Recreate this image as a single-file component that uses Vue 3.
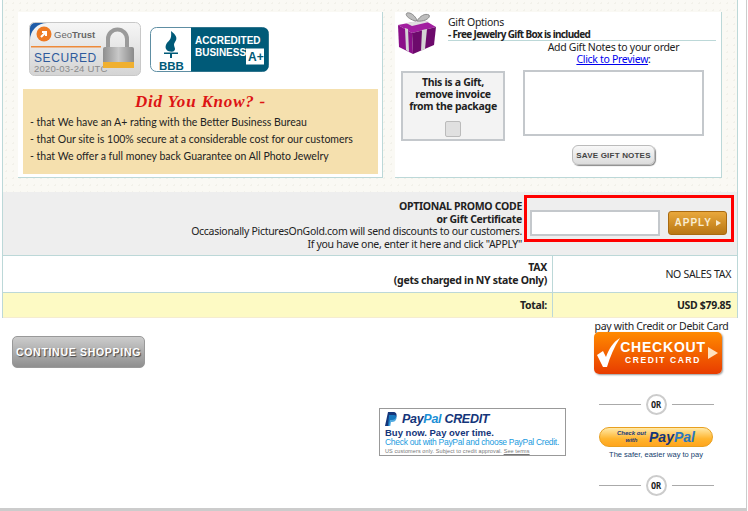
<template>
  <div class="page">
    <div class="frame">
      <section class="top">
        <div class="box box-left">
          <div class="badges">
            <svg class="geotrust" width="112" height="54" viewBox="0 0 112 54">
              <defs>
                <linearGradient id="geoBg" x1="0" y1="0" x2="0" y2="1">
                  <stop offset="0" stop-color="#f6f6f6" />
                  <stop offset="1" stop-color="#d4d4d4" />
                </linearGradient>
                <linearGradient id="lockBody" x1="0" y1="0" x2="1" y2="0">
                  <stop offset="0" stop-color="#8e8e8e" />
                  <stop offset="0.5" stop-color="#c8c8c8" />
                  <stop offset="1" stop-color="#8a8a8a" />
                </linearGradient>
              </defs>
              <rect x="0.5" y="0.5" width="111" height="53" rx="5" fill="url(#geoBg)" stroke="#c8c8c8" />
              <path d="M1 18V6a5 5 0 0 1 5-5h12a17 17 0 0 0-17 17z" fill="#1f5ca8" />
              <circle cx="15" cy="12" r="7.5" fill="#ee7a23" />
              <path d="M12 15l5-5m-4 0h4v4" stroke="#fff" stroke-width="2" fill="none" />
              <text x="25" y="16" class="geo-name">Geo<tspan font-weight="700">Trust</tspan></text>
              <rect x="2" y="24" width="70" height="1.5" fill="#ee8a3a" />
              <text x="5" y="40" class="geo-sec">SECURED</text>
              <text x="5" y="50" class="geo-date">2020-03-24 UTC</text>
              <path d="M79 28v-11a9.500 9.500 0 0 1 19 0v11" fill="none" stroke="#9a9a9a" stroke-width="4" />
              <rect x="74" y="25" width="31" height="21" rx="2" fill="url(#lockBody)" />
              <rect x="74" y="40" width="31" height="6" fill="#f0b030" />
            </svg>
            <svg class="bbb" width="119" height="45" viewBox="0 0 119 45">
              <rect x="0.500" y="0.500" width="118" height="44" rx="6" fill="#fff" stroke="#5e8ea3" />
              <path d="M41 0.500h72a5.500 5.500 0 0 1 5.500 5.500v33a5.500 5.500 0 0 1-5.500 5.500H41z" fill="#005a78" />
              <path d="M21 4c5 4 7 7 4 11s2 6-1 9c-1 1-3 1-6 0-3-2-3-5-1-8s5-3 4-12z" fill="#005a78" />
              <rect x="14" y="25.500" width="14" height="1.500" fill="#005a78" />
              <rect x="20" y="27" width="2" height="4" fill="#005a78" />
              <text x="9" y="43" class="bbb-mark">BBB</text>
              <text x="45" y="17" class="bbb-text">ACCREDITED</text>
              <text x="45" y="29" class="bbb-text">BUSINESS</text>
              <rect x="96" y="21.500" width="18" height="16" fill="#fff" />
              <text x="98" y="34" class="bbb-rate">A+</text>
            </svg>
          </div>
          <div class="know">
            <h3 class="know-title">Did You Know? -</h3>
            <p>- that We have an A+ rating with the Better Business Bureau</p>
            <p>- that Our site is 100% secure at a considerable cost for our customers</p>
            <p>- that We offer a full money back Guarantee on All Photo Jewelry</p>
          </div>
        </div>

        <div class="box box-right">
          <div class="gift-head">
            <svg class="gift-icon" width="42" height="42" viewBox="0 0 42 42">
              <path d="M2 13l26-5 12 7-24 6z" fill="#a21fa0" />
              <path d="M2 13l14 8 1 21-14-7z" fill="#8a0f88" />
              <path d="M16 21l24-6-2 18-21 9z" fill="#6d0a6c" />
              <path d="M9 16l3 1 1 23-3-2zM26 18l5-1-2 20-4 2z" fill="#d4d4d4" />
              <path d="M10 11l6 3 17-4-5-2z" fill="#e0e0e0" />
              <path d="M20 9C14 8 8 3 11 1c4-1 8 3 10 7zM21 9c3-5 8-8 12-6 2 3-5 7-12 6z" fill="#bdbdbd" stroke="#8d8d8d" />
            </svg>
            <div class="gift-title">
              <div>Gift Options</div>
              <div class="gift-free">- Free Jewelry Gift Box is included</div>
            </div>
          </div>
          <div class="gift-body">
            <div class="invoice">
              <div>This is a Gift,<br />remove invoice<br />from the package</div>
              <span class="check"></span>
            </div>
            <div class="notes">
              <div class="notes-title">Add Gift Notes to your order</div>
              <div class="preview"><a href="#">Click to Preview</a>:</div>
              <textarea class="notes-input"></textarea>
              <button class="save">SAVE GIFT NOTES</button>
            </div>
          </div>
        </div>
      </section>

      <section class="promo">
        <div class="promo-text">
          <strong>OPTIONAL PROMO CODE</strong>
          <strong>or Gift Certificate</strong>
          <span>Occasionally PicturesOnGold.com will send discounts to our customers.</span>
          <span>If you have one, enter it here and click "APPLY"</span>
        </div>
        <div class="promo-box">
          <input class="promo-input" />
          <button class="apply">APPLY <i></i></button>
        </div>
      </section>

      <section class="row row-tax">
        <div class="label"><strong>TAX</strong><strong>(gets charged in NY state Only)</strong></div>
        <div class="value">NO SALES TAX</div>
      </section>
      <section class="row row-total">
        <div class="label"><strong>Total:</strong></div>
        <div class="value"><strong>USD $79.85</strong></div>
      </section>
    </div>

    <section class="bottom">
      <button class="continue">CONTINUE SHOPPING</button>
      <div class="credit">
        <div class="credit-logo">
          <svg width="12" height="14" viewBox="0 0 12 14"><path d="M3 0h5c3 0 4 2 3.500 4.500C11 7 9 8 7 8H5l-1 6H0z" fill="#14357a" /><path d="M4 3h5c2 0 3 1.500 2.500 3.500C11 9 9 10 7 10H6l-.7 4H3z" fill="#1a8fd6" opacity="0.75" /></svg>
          <span><i>Pay</i><i class="pal">Pal</i> <i>CREDIT</i></span>
        </div>
        <div class="credit-buy">Buy now. Pay over time.</div>
        <div class="credit-check">Check out with PayPal and choose PayPal Credit.</div>
        <div class="credit-small">US customers only. Subject to credit approval. <u>See terms</u></div>
      </div>
      <div class="pay">
        <div class="pay-title">pay with Credit or Debit Card</div>
        <button class="checkout">
          <svg width="24" height="30" viewBox="0 0 24 30"><path d="M0 17l6-4 3 6C12 11 16 4 23 0 17 9 13 19 10 29H6z" fill="#fff" /></svg>
          <span class="checkout-text"><b>CHECKOUT</b><small>CREDIT CARD</small></span>
          <i></i>
        </button>
        <div class="or"><span>OR</span></div>
        <div class="paypal">
          <span class="paypal-check">Check out<br />with</span>
          <span class="paypal-name"><i>Pay</i><i class="pal">Pal</i></span>
        </div>
        <div class="paypal-note">The safer, easier way to pay</div>
        <div class="or or-last"><span>OR</span></div>
      </div>
    </section>
  </div>
</template>

<script setup>
</script>

<style>
html, body {
  margin: 0;
  background: #fff;
}
</style>

<style scoped>
.page {
  width: 746px;
  height: 508px;
  border-right: 1px solid #ccc;
  border-bottom: 3px solid #ccc;
  overflow: hidden;
  font-family: "Noto Sans", "Liberation Sans", sans-serif;
  font-size: 10.5px;
  letter-spacing: -0.3px;
  color: #222;
  background: #fff;
}
.frame {
  margin-left: 2px;
  width: 736px;
  border-left: 1px solid #bcd8d8;
  border-right: 1px solid #bcd8d8;
  box-sizing: border-box;
}
.top {
  display: flex;
  gap: 12px;
  height: 192px;
  padding: 12px 15px 15px;
  box-sizing: border-box;
  background-color: #faf9f4;
  background-image: radial-gradient(#f2f1ea 1px, transparent 1px);
  background-size: 7px 7px;
}
.box {
  background: #fff;
  border-right: 1px solid #bcd8d8;
  border-bottom: 1px solid #bcd8d8;
  box-sizing: border-box;
  height: 166px;
}
.box-left {
  width: 366px;
  padding: 10px 4px 0 5px;
}
.badges {
  display: flex;
  align-items: center;
  gap: 9px;
  padding-left: 6px;
  height: 54px;
  letter-spacing: 0;
}
.geo-name {
  font: 9.500px "Liberation Sans", sans-serif;
  fill: #666;
}
.geo-sec {
  font: 12px "Liberation Sans", sans-serif;
  fill: #2e5a9c;
  letter-spacing: 0.6px;
}
.geo-date {
  font: 9.500px "Liberation Sans", sans-serif;
  fill: #8a8a8a;
  letter-spacing: 0.2px;
}
.bbb-mark {
  font: 700 11.500px "Liberation Sans", sans-serif;
  fill: #005a78;
}
.bbb-text {
  font: 700 10px "Liberation Sans", sans-serif;
  fill: #fff;
}
.bbb-rate {
  font: 700 12px "Liberation Sans", sans-serif;
  fill: #005a78;
}
.know {
  margin-top: 13px;
  height: 85px;
  background: #f5e0ae;
  padding: 3px 7px 0;
  box-sizing: border-box;
  font-family: Lato, "Liberation Sans", sans-serif;
  font-size: 10.5px;
  letter-spacing: 0;
  color: #222;
}
.know-title {
  margin: 0 0 2px;
  text-align: center;
  font: italic 700 17px/20px "Liberation Serif", serif;
  color: #dd1414;
  letter-spacing: 0.8px;
}
.know p {
  margin: 0;
  line-height: 17px;
}
.box-right {
  width: 327px;
  padding: 0 1px;
}
.gift-head {
  display: flex;
  gap: 10px;
  height: 28px;
}
.gift-icon {
  flex: none;
}
.gift-title {
  flex: 1;
  margin-right: 4px;
  padding-top: 4px;
  line-height: 12px;
  height: 29px;
  box-sizing: border-box;
  border-bottom: 1px solid #bcd8d8;
}
.gift-free {
  font-weight: 700;
  font-size: 10px;
  letter-spacing: -0.65px;
}
.gift-body {
  display: flex;
  align-items: flex-start;
}
.invoice {
  width: 104px;
  height: 70px;
  margin: 31px 0 0 5px;
  flex: none;
  border: 2px solid #c4c8cc;
  background: #f3f3f3;
  box-sizing: border-box;
  padding-top: 3px;
  text-align: center;
  font-weight: 700;
  line-height: 12px;
}
.check {
  display: block;
  width: 14px;
  height: 14px;
  margin: 9px auto 0;
  background: #e0e0e0;
  border: 1px solid #bbb;
  border-radius: 2px;
}
.notes {
  flex: 1;
  display: flex;
  flex-direction: column;
  align-items: center;
  margin-left: 18px;
  margin-right: 18px;
}
.notes-title {
  line-height: 12px;
  margin-top: 1px;
}
.preview {
  line-height: 12px;
}
.preview a {
  color: #0000ee;
}
.notes-input {
  display: block;
  width: 181px;
  height: 66px;
  margin: 5px 0 0;
  box-sizing: border-box;
  border: 2px solid #c4c8cc;
  background: #fff;
  resize: none;
}
.save {
  width: 83px;
  height: 20px;
  margin-top: 9px;
  padding: 0;
  border: 1px solid #bbb;
  border-radius: 6px;
  background: linear-gradient(#f8f8f8, #dcdcdc);
  box-shadow: 1px 1px 1px #888;
  font: 700 8px "Liberation Sans", sans-serif;
  letter-spacing: 0.2px;
  white-space: nowrap;
  color: #444;
}
.promo {
  display: flex;
  justify-content: flex-end;
  height: 64px;
  background: #eee;
  padding: 3px 3px 0 0;
  box-sizing: border-box;
  border-bottom: 1px solid #bcd8d8;
}
.promo-text {
  display: flex;
  flex-direction: column;
  align-items: flex-end;
  padding-top: 5px;
  margin-right: 2px;
  line-height: 12.500px;
}
.promo-box {
  width: 210px;
  height: 47px;
  box-sizing: border-box;
  border: 3px solid #f00;
  display: flex;
  align-items: center;
  gap: 8px;
  padding: 8px 3px 0;
}
.promo-input {
  width: 130px;
  height: 26px;
  box-sizing: border-box;
  padding: 0;
  border: 2px solid #c4c8cc;
  background: #fff;
}
.apply {
  width: 59px;
  height: 24px;
  padding: 0;
  border: 1px solid #a96a10;
  border-radius: 3px;
  background: linear-gradient(#e9a83c, #b97714);
  color: #f8ecd0;
  font: 700 10px "Liberation Sans", sans-serif;
  letter-spacing: 1px;
}
.apply i {
  display: inline-block;
  border-left: 5px solid #f8ecd0;
  border-top: 3px solid transparent;
  border-bottom: 3px solid transparent;
}
.row {
  display: grid;
  grid-template-columns: 550px 1fr;
  box-sizing: border-box;
}
.row-tax {
  height: 37px;
  border-bottom: 1px solid #bcd8d8;
}
.row-total {
  height: 25px;
  background: #fdfac4;
  border-bottom: 1px solid #f5ecd0;
}
.label {
  display: flex;
  flex-direction: column;
  justify-content: center;
  align-items: flex-end;
  padding-right: 5px;
  line-height: 13px;
  border-right: 1px solid #bcd8d8;
}
.value {
  display: flex;
  align-items: center;
  justify-content: flex-end;
  padding-right: 6px;
}
.bottom {
  display: flex;
  align-items: flex-start;
  padding-left: 12px;
}
.continue {
  flex: none;
  width: 133px;
  height: 32px;
  margin-top: 18px;
  padding: 0;
  border: 1px solid #999;
  border-radius: 5px;
  background: linear-gradient(#ccc, #8f8f8f);
  color: #fff;
  font: 700 10.500px "Liberation Sans", sans-serif;
  letter-spacing: 0.7px;
  text-shadow: 1px 1px 1px #444;
}
.credit {
  flex: none;
  width: 187px;
  height: 48px;
  margin: 90px 0 0 234px;
  box-sizing: border-box;
  border: 1px solid #999;
  padding: 3px 0 0 5px;
  font-family: "Liberation Sans", sans-serif;
  white-space: nowrap;
}
.credit-logo {
  display: flex;
  align-items: center;
  gap: 5px;
  font: italic 700 12.500px/14px "Liberation Sans", sans-serif;
  color: #14357a;
  letter-spacing: -0.3px;
}
.pal {
  color: #1a8fd6;
}
.credit-buy {
  font: 700 9.500px/11px "Liberation Sans", sans-serif;
  color: #14357a;
  letter-spacing: 0;
  margin-top: 1px;
}
.credit-check {
  font-size: 8.500px;
  line-height: 9px;
  color: #1a9be0;
}
.credit-small {
  font-size: 5.500px;
  line-height: 8px;
  color: #777;
  letter-spacing: 0.1px;
}
.pay {
  flex: none;
  width: 150px;
  margin-left: 15px;
  display: flex;
  flex-direction: column;
  align-items: center;
}
.pay-title {
  line-height: 13px;
  margin: 2px 0 0 11px;
  white-space: nowrap;
}
.checkout {
  width: 128px;
  height: 42px;
  padding: 0 3px;
  margin: -1px 0 0 4px;
  border: none;
  border-radius: 5px;
  background: linear-gradient(#ff8a00, #e83c00);
  box-shadow: 1px 1px 2px #999;
  display: flex;
  align-items: center;
  color: #fff;
  font-family: "Liberation Sans", sans-serif;
}
.checkout svg {
  flex: none;
}
.checkout-text {
  display: flex;
  flex-direction: column;
  align-items: center;
  width: 84px;
}
.checkout-text b {
  font-size: 14px;
  line-height: 15px;
  letter-spacing: 0.8px;
}
.checkout-text small {
  font-size: 8.500px;
  font-weight: 700;
  line-height: 11px;
  letter-spacing: 1.6px;
}
.checkout i {
  margin-left: 3px;
  border-left: 10px solid #ffe2c0;
  border-top: 6px solid transparent;
  border-bottom: 6px solid transparent;
}
.or {
  width: 115px;
  margin-top: 20px;
  display: flex;
  justify-content: center;
  align-items: center;
  background: linear-gradient(#aaa, #aaa) center / 100% 1px no-repeat;
}
.or span {
  width: 21px;
  height: 21px;
  box-sizing: border-box;
  border: 2px solid #ccc;
  border-radius: 50%;
  background: #fff;
  box-shadow: 0 0 0 5px #fff;
  display: flex;
  align-items: center;
  justify-content: center;
  font: 700 8.500px "DejaVu Sans Mono", monospace;
  letter-spacing: 0;
}
.or-last {
  margin-top: 16px;
}
.paypal {
  width: 114px;
  height: 20px;
  margin-top: 12px;
  border: 1px solid #e8a020;
  border-radius: 10px;
  box-sizing: border-box;
  background: linear-gradient(#ffe9a8, #ffb52e 60%, #ffa51e);
  display: flex;
  align-items: center;
  justify-content: center;
  gap: 3px;
  font-family: "Liberation Sans", sans-serif;
}
.paypal-check {
  font: italic 700 6px/7px "Liberation Sans", sans-serif;
  color: #14357a;
  text-align: center;
  letter-spacing: 0;
}
.paypal-name {
  font: italic 700 14px "Liberation Sans", sans-serif;
  color: #14357a;
  letter-spacing: 0;
}
.paypal-name .pal {
  color: #2a78c0;
}
.paypal-note {
  font: 7.500px/9px "Liberation Sans", sans-serif;
  color: #14406e;
  margin-top: 3px;
  letter-spacing: 0;
}
</style>
